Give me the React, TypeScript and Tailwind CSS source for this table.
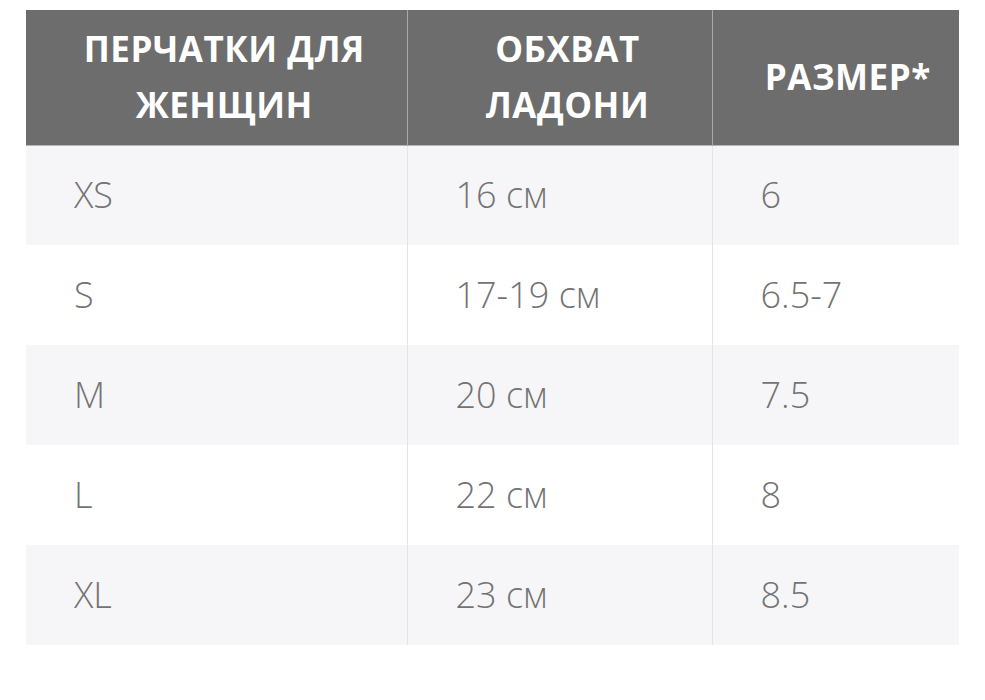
const rows = [
  ["XS", "16 см", "6"],
  ["S", "17-19 см", "6.5-7"],
  ["M", "20 см", "7.5"],
  ["L", "22 см", "8"],
  ["XL", "23 см", "8.5"],
];

export default function App() {
  return (
    <div className="min-h-[700px] bg-white pt-[10px] pl-[26px] font-['Open_Sans',sans-serif]">
      <table className="w-[933px] border-collapse table-fixed">
        <colgroup>
          <col className="w-[381px]" />
          <col className="w-[305px]" />
          <col className="w-[247px]" />
        </colgroup>
        <thead>
          <tr className="h-[135px] bg-[#6d6d6d] border-b border-[#b5b5b5]">
            <th className="pl-12 pr-8 text-center text-[35px] leading-[56px] font-bold text-white tracking-[0.5px]">
              ПЕРЧАТКИ ДЛЯ ЖЕНЩИН
            </th>
            <th className="pl-12 pr-8 text-center text-[35px] leading-[56px] font-bold text-white tracking-[0.5px] border-l border-[#a9a9a9]">
              ОБХВАТ ЛАДОНИ
            </th>
            <th className="pl-12 pr-6 text-center text-[35px] leading-[56px] font-bold text-white tracking-[0.5px] border-l border-[#a9a9a9]">
              РАЗМЕР*
            </th>
          </tr>
        </thead>
        <tbody>
          {rows.map((r, i) => (
            <tr key={i} className={`h-[100px] ${i % 2 === 0 ? "bg-[#f6f6f8]" : "bg-white"}`}>
              {r.map((c, j) => (
                <td
                  key={j}
                  className={`pl-12 text-[36px] font-light text-[#737373] ${j > 0 ? "border-l border-[#e4e4e4]" : ""}`}
                >
                  {c}
                </td>
              ))}
            </tr>
          ))}
        </tbody>
      </table>
    </div>
  );
}
